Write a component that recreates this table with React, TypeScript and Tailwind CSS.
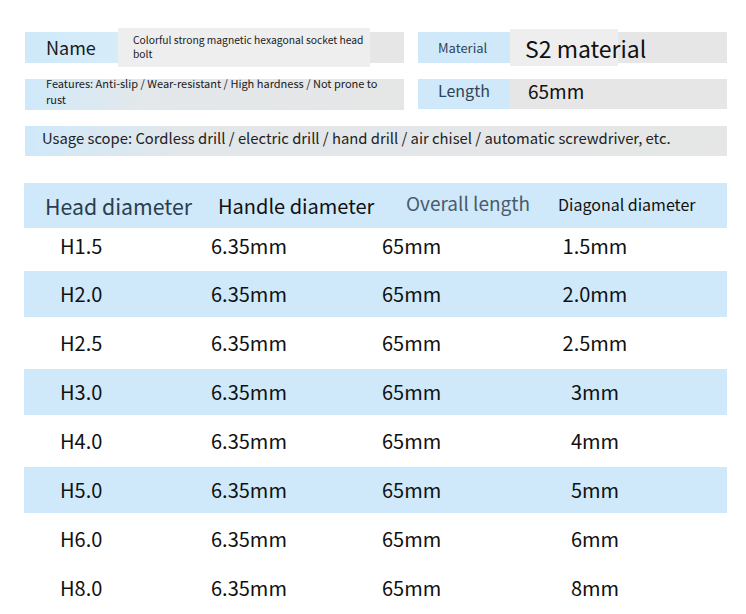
const rows = [
  { head: 'H1.5', diag: '1.5mm' },
  { head: 'H2.0', diag: '2.0mm' },
  { head: 'H2.5', diag: '2.5mm' },
  { head: 'H3.0', diag: '3mm' },
  { head: 'H4.0', diag: '4mm' },
  { head: 'H5.0', diag: '5mm' },
  { head: 'H6.0', diag: '6mm' },
  { head: 'H8.0', diag: '8mm' },
];

// row heights: blue bands are 46px, white rows a bit taller
const rowClass = [
  'h-[43px] pb-[8px] bg-white',
  'h-[46px] bg-[#cfe9fa]',
  'h-[52px] bg-white',
  'h-[46px] bg-[#cfe9fa]',
  'h-[52px] bg-white',
  'h-[46px] bg-[#cfe9fa]',
  'h-[52px] bg-white',
  'h-[46px] bg-white',
];

export default function App() {
  return (
    <div className="w-[746px] h-[614px] overflow-hidden bg-white font-['Noto_Sans_CJK_SC','Noto_Sans',sans-serif] text-[#1a1a1a]">
      <div className="pl-[25px] pr-[19px] pt-[32px]">
        {/* spec rows */}
        <div className="flex gap-[14px]">
          <div className="flex h-[31px] w-[379px] bg-[#e6e6e6]">
            <div className="flex w-[93px] items-center bg-gradient-to-r from-[#cfe9fa] to-[#d6ecf9] pl-[21px] text-[18px] text-[#1a1a1a]">
              Name
            </div>
            <div className="-my-[4px] flex w-[252px] items-center bg-[#eeeeee] pb-[2px] pl-[15px] text-[10.3px] leading-[14px]">
              Colorful strong magnetic hexagonal socket head
              <br />
              bolt
            </div>
          </div>
          <div className="flex h-[31px] w-[309px] bg-[#e6e6e6]">
            <div className="flex w-[92px] items-center bg-[#cfe9fa] pl-[20px] text-[13px] text-[#2f4356]">
              Material
            </div>
            <div className="-my-[3px] flex w-[108px] items-center whitespace-nowrap bg-[#eeeeee] pl-[15px] pt-[1px] text-[23px] text-[#111]">
              S2 material
            </div>
          </div>
        </div>

        <div className="mt-[16px] flex gap-[14px]">
          <div className="flex h-[31px] w-[379px] items-center bg-gradient-to-r from-[#cfe9fa] via-[#e3e8eb] via-[30%] to-[#e6e6e6] pb-[7px] pl-[21px] text-[11px] leading-[16px]">
            Features: Anti-slip / Wear-resistant / High hardness / Not prone to
            <br />
            rust
          </div>
          <div className="flex h-[30px] w-[309px] bg-[#e6e6e6]">
            <div className="flex w-[92px] items-center bg-[#cfe9fa] pb-[8px] pl-[20px] text-[16px] text-[#2f4356]">
              Length
            </div>
            <div className="flex items-center pb-[5px] pl-[18px] text-[19px] text-[#111]">65mm</div>
          </div>
        </div>

        <div className="mt-[16px] flex h-[30px] w-[702px] items-center bg-gradient-to-r from-[#cfe9fa] via-[#e2e7ea] via-[22%] to-[#e6e6e6] pb-[6px] pl-[17px] text-[14.8px] text-[#222]">
          Usage scope: Cordless drill / electric drill / hand drill / air chisel / automatic screwdriver, etc.
        </div>
      </div>

      {/* size table */}
      <div className="mt-[27px] ml-[24px] w-[703px]">
        <div className="grid h-[45px] grid-cols-[194px_188px_152px_1fr] items-center whitespace-nowrap bg-[#cfe9fa]">
          <div className="pl-[21px] text-[21.3px] text-[#2b3d4f]">Head diameter</div>
          <div className="text-[20px] text-[#111]">Handle diameter</div>
          <div className="-mt-[5px] text-[19px] text-[#4a5b6c]">Overall length</div>
          <div className="-mt-[3px] text-[16px] text-[#111]">Diagonal diameter</div>
        </div>
        {rows.map((r, i) => (
          <div
            key={r.head}
            className={`grid grid-cols-[187px_171px_150px_1fr] items-center text-[20px] text-[#111] ${rowClass[i]}`}
          >
            <div className="pl-[36px]">{r.head}</div>
            <div>6.35mm</div>
            <div>65mm</div>
            <div className="w-[126px] text-center">{r.diag}</div>
          </div>
        ))}
      </div>
    </div>
  );
}
